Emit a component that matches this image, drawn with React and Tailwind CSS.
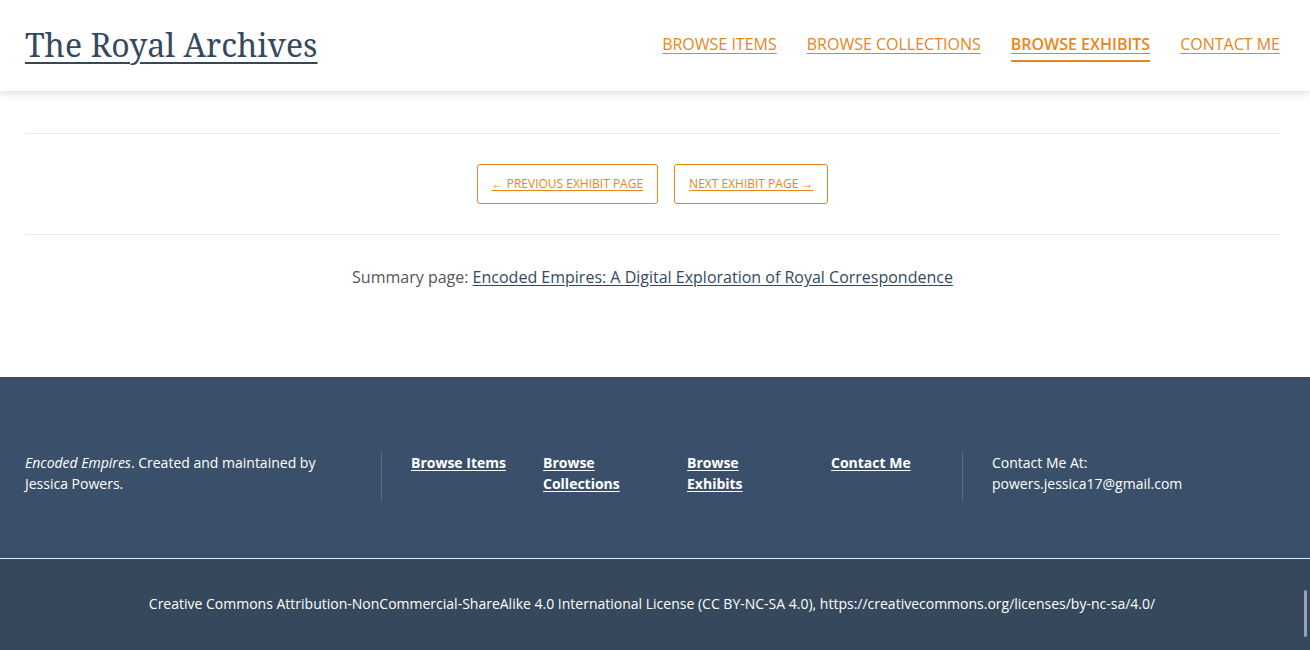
const navLinks = [
    { label: "Browse Items" },
    { label: "Browse Collections" },
    { label: "Browse Exhibits", active: true },
    { label: "Contact Me" },
];

const footerLinks = ["Browse Items", "Browse Collections", "Browse Exhibits", "Contact Me"];

const App = () => {
    return (
        <div className="relative min-h-[650px] bg-white font-['Open_Sans',sans-serif] text-[16px]">
            <header className="relative z-10 flex h-[91px] items-center justify-between bg-white pl-[25px] pr-[30px] shadow-[0_3px_8px_rgba(0,0,0,0.12)]">
                <a
                    href="#"
                    className="font-['Noto_Serif','DejaVu_Serif',serif] text-[32px] leading-none text-[#34495e] underline decoration-2 underline-offset-[5px] pb-[2px]"
                >
                    The Royal Archives
                </a>
                <nav className="flex items-center gap-[30px] mb-[3px]">
                    {navLinks.map((link) => (
                        <a
                            key={link.label}
                            href="#"
                            className={`relative uppercase text-[16px] leading-[24px] text-[#e8861a] underline underline-offset-[3px] ${
                                link.active ? "font-semibold" : ""
                            }`}
                        >
                            {link.label}
                            {link.active && (
                                <span className="absolute left-0 right-0 top-[28px] h-[2px] bg-[#e8861a]" />
                            )}
                        </a>
                    ))}
                </nav>
            </header>

            <main className="pl-[25px] pr-[30px] pt-[42px] pb-[88px]">
                <div className="border-t border-[#e8e8e8]" />
                <div className="flex justify-center gap-4 py-[30px]">
                    <a
                        href="#"
                        className="flex h-[40px] items-center rounded-[3px] border border-[#e8861a] px-[14px] text-[12px] uppercase text-[#e8861a] underline underline-offset-2"
                    >
                        ← Previous Exhibit Page
                    </a>
                    <a
                        href="#"
                        className="flex h-[40px] items-center rounded-[3px] border border-[#e8861a] px-[14px] text-[12px] uppercase text-[#e8861a] underline underline-offset-2"
                    >
                        Next Exhibit Page →
                    </a>
                </div>
                <div className="border-t border-[#e8e8e8]" />
                <p className="pt-[30px] text-center leading-[24px] text-[#555]">
                    Summary page:{" "}
                    <a href="#" className="text-[#34495e] underline underline-offset-2">
                        Encoded Empires: A Digital Exploration of Royal Correspondence
                    </a>
                </p>
            </main>

            <footer className="text-[14px] leading-[21px] text-white">
                <div className="flex items-start bg-[#3a506a] px-[25px] pt-[75px] pb-[57px]">
                    <div className="w-[356px] pr-6">
                        <em>Encoded Empires</em>. Created and maintained by Jessica Powers.
                    </div>
                    <div className="grid min-h-[49px] w-[581px] grid-cols-[132px_144px_144px_1fr] border-l border-[#5b6f86] pl-[29px]">
                        {footerLinks.map((label) => (
                            <div key={label}>
                                <a href="#" className="inline-block max-w-[100px] font-bold underline underline-offset-2">
                                    {label}
                                </a>
                            </div>
                        ))}
                    </div>
                    <div className="min-h-[49px] border-l border-[#5b6f86] pl-[29px]">
                        <p>Contact Me At:</p>
                        <p>powers.jessica17@gmail.com</p>
                    </div>
                </div>
                <div className="flex h-[92px] items-center justify-center border-t border-[#e6e9ee] bg-[#35485c] pb-[2px] pr-[6px]">
                    Creative Commons Attribution-NonCommercial-ShareAlike 4.0 International License (CC BY-NC-SA 4.0), https://creativecommons.org/licenses/by-nc-sa/4.0/
                </div>
            </footer>

            <div className="absolute right-[3px] top-[590px] h-[47px] w-[3px] rounded-sm bg-[#9aa3ad]" />
        </div>
    );
};

export default App;
